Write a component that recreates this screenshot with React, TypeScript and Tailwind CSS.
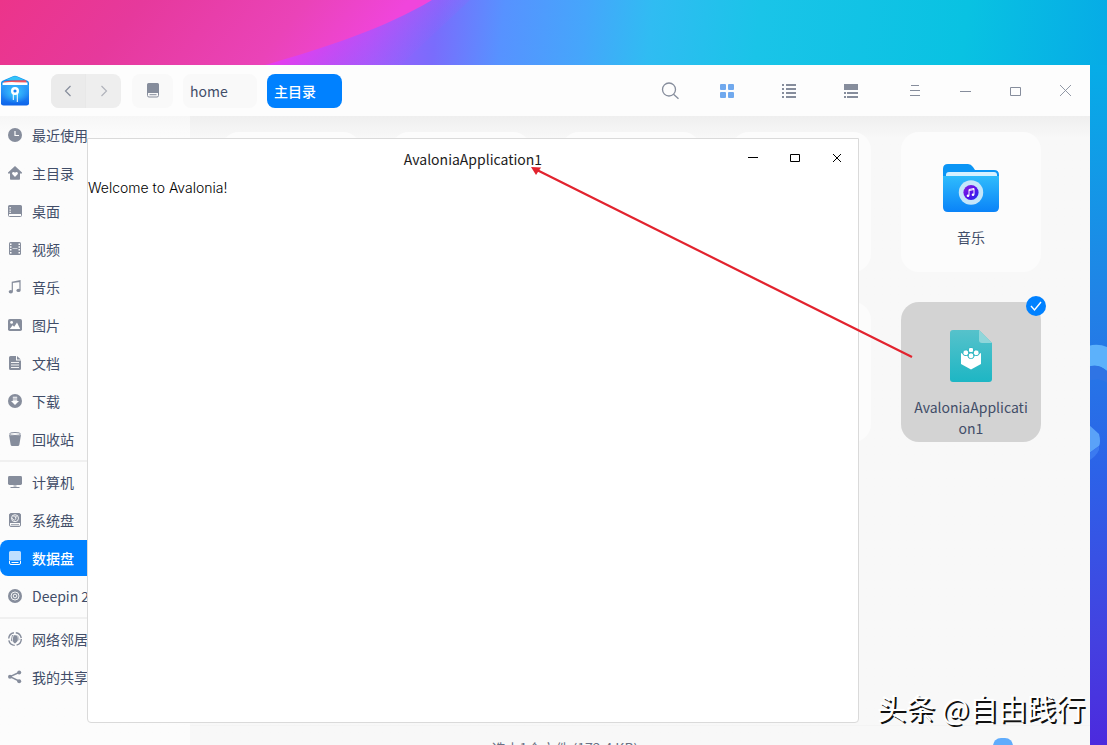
import { useState } from "react"
import type { ReactNode } from "react"

type Place = { id: string; label: string; icon: ReactNode }

/* 14x14 sidebar glyphs, all in currentColor */
function Glyph({ children }: { children: ReactNode }) {
  return (
    <svg viewBox="0 0 14 14" className="size-3.5 shrink-0" fill="currentColor" aria-hidden="true">
      {children}
    </svg>
  )
}

const groups: Place[][] = [
  [
    {
      id: "recent",
      label: "最近使用",
      icon: (
        <Glyph>
          <circle cx="7" cy="7" r="7" />
          <path d="M7 3v4.5h4" fill="none" stroke="#fff" strokeWidth="1.2" />
        </Glyph>
      ),
    },
    {
      id: "home",
      label: "主目录",
      icon: (
        <Glyph>
          <path d="M7 0l7 6.6c.2.5 0 .9-.5.9H12V13a.8.8 0 0 1-.8.8H2.8A.8.8 0 0 1 2 13V7.500H.500C0 7.500-.2 7 0 6.600z" />
          <path d="M7 11L4.400 8.300C3.600 7.300 4.300 5.900 5.500 5.900c.7 0 1.200.4 1.500.9.3-.5.8-.9 1.500-.9 1.200 0 1.900 1.400 1.100 2.400z" fill="#fff" />
        </Glyph>
      ),
    },
    {
      id: "desktop",
      label: "桌面",
      icon: (
        <Glyph>
          <path d="M1.500 1h11A1.500 1.500 0 0 1 14 2.500V10H0V2.500A1.500 1.500 0 0 1 1.500 1z" />
          <path d="M.5 10v1.500a1 1 0 0 0 1 1h11a1 1 0 0 0 1-1V10" fill="none" stroke="currentColor" />
          <path d="M1.500 3h1.300v1.300H1.500zM1.500 5.400h1.300v1.300H1.500zM1.500 7.800h1.300V9H1.500z" fill="#fff" />
        </Glyph>
      ),
    },
    {
      id: "videos",
      label: "视频",
      icon: (
        <Glyph>
          <rect x="1" y="0" width="12" height="13" rx="1.500" />
          <path d="M2 1.500h1.500V3H2zM2 4.300h1.500v1.500H2zM2 7.100h1.500v1.500H2zM2 9.900h1.500v1.500H2zM10.500 1.500H12V3h-1.500zM10.500 4.300H12v1.500h-1.500zM10.500 7.100H12v1.500h-1.500zM10.500 9.900H12v1.500h-1.500z" fill="#fff" />
          <path d="M4.500 6.500h5" stroke="#fff" strokeWidth=".6" />
        </Glyph>
      ),
    },
    {
      id: "music",
      label: "音乐",
      icon: (
        <Glyph>
          <path d="M4.300 11.500V2.300L12 .8v9.200M4.300 2.500L12 1.300" fill="none" stroke="currentColor" strokeWidth="1.200" />
          <ellipse cx="2.800" cy="11.700" rx="2.100" ry="1.700" />
          <ellipse cx="10.500" cy="10.400" rx="2.100" ry="1.700" />
        </Glyph>
      ),
    },
    {
      id: "pictures",
      label: "图片",
      icon: (
        <Glyph>
          <rect x="0" y="1" width="14" height="12" rx="1.800" />
          <circle cx="3.600" cy="4.400" r="1.400" fill="#fff" />
          <path d="M1.800 11l2.800-3.800 1.600 1.500L9 4.600l3.200 6.400z" fill="#fff" />
        </Glyph>
      ),
    },
    {
      id: "documents",
      label: "文档",
      icon: (
        <Glyph>
          <path d="M2.500 0H8v4.500h5v8a1.500 1.500 0 0 1-1.500 1.500h-9A1.500 1.500 0 0 1 1 12.500v-11A1.500 1.500 0 0 1 2.500 0z" />
          <path d="M9 0l3.800 3.500H9z" />
          <path d="M3 6.500h8M3 9h8M3 11.500h8" stroke="#fff" strokeWidth=".9" />
        </Glyph>
      ),
    },
    {
      id: "downloads",
      label: "下载",
      icon: (
        <Glyph>
          <circle cx="7" cy="7" r="7" />
          <path d="M4.800 2.800h4.400v.9H4.800zM4.800 4.600h4.400v.9H4.800zM4.800 6.300h4.400v.7H11L7 10.900 3 7h1.800z" fill="#fff" />
        </Glyph>
      ),
    },
    {
      id: "trash",
      label: "回收站",
      icon: (
        <Glyph>
          <ellipse cx="7" cy="2" rx="5.500" ry="1.500" fill="none" stroke="currentColor" />
          <path d="M1 2.800c2 1.300 10 1.300 12 0l-1.600 9.600c-.2 1.100-1 1.600-2 1.600H4.600c-1 0-1.800-.5-2-1.600z" />
        </Glyph>
      ),
    },
  ],
  [
    {
      id: "computer",
      label: "计算机",
      icon: (
        <Glyph>
          <rect x="0" y="1" width="14" height="9" rx="1.400" />
          <path d="M5.500 10.500h3v1h-3zM2.500 12h9v1h-9z" />
        </Glyph>
      ),
    },
    {
      id: "system",
      label: "系统盘",
      icon: (
        <Glyph>
          <rect x="1.500" y=".5" width="11" height="13" rx="1.500" fill="none" stroke="currentColor" />
          <path d="M1.500 1h11v9h-11z" />
          <circle cx="7" cy="5.200" r="3.500" fill="none" stroke="#fff" strokeWidth=".9" />
          <path d="M5.400 3.300c2.800-.6 3.400 2.600 1 4M7.200 4.800l1.300-1.800M3.800 5l2 2" fill="none" stroke="#fff" strokeWidth=".9" />
          <path d="M3 11.800h8" stroke="currentColor" />
        </Glyph>
      ),
    },
    {
      id: "data",
      label: "数据盘",
      icon: (
        <Glyph>
          <path d="M2.500 0h9A1.500 1.500 0 0 1 13 1.500V9.500H1v-8A1.500 1.500 0 0 1 2.500 0z" opacity=".75" />
          <path d="M1.500 10v2a1.500 1.500 0 0 0 1.500 1.500h8a1.500 1.500 0 0 0 1.500-1.500v-2M3.500 11.500h7" fill="none" stroke="currentColor" />
        </Glyph>
      ),
    },
    {
      id: "deepin",
      label: "Deepin 20",
      icon: (
        <Glyph>
          <circle cx="7" cy="7" r="7" />
          <circle cx="7" cy="7" r="4" fill="none" stroke="#fff" strokeWidth=".9" />
          <circle cx="7" cy="7" r="1.800" fill="none" stroke="#fff" strokeWidth=".9" />
        </Glyph>
      ),
    },
  ],
  [
    {
      id: "network",
      label: "网络邻居",
      icon: (
        <Glyph>
          <circle cx="7" cy="7" r="6.300" fill="none" stroke="currentColor" strokeWidth="1.400" strokeDasharray="8 1.900" />
          <path d="M4 3l6 .5 1.500 4L7 11.500 2.800 8.500z" />
          <path d="M7.500 1C3.500 4 3.500 10 6.500 13M8.500 2.500c2 2 2.500 6 .5 9" fill="none" stroke="#fff" strokeWidth=".8" />
        </Glyph>
      ),
    },
    {
      id: "shares",
      label: "我的共享",
      icon: (
        <Glyph>
          <path d="M2 6.700L11 2.500M2 6.700l9 4.300" stroke="currentColor" strokeWidth="1.400" />
          <circle cx="2" cy="6.700" r="2" />
          <circle cx="11.200" cy="2.400" r="2" />
          <circle cx="11.200" cy="11.200" r="2" />
        </Glyph>
      ),
    },
  ],
]

function Wallpaper() {
  return (
    <svg
      className="absolute inset-0 size-full"
      viewBox="0 0 1107 745"
      preserveAspectRatio="none"
      aria-hidden="true"
    >
      <defs>
        <linearGradient id="sky" gradientUnits="userSpaceOnUse" x1="290" y1="0" x2="1107" y2="90">
          <stop offset="0" stopColor="#c04df4" />
          <stop offset=".1" stopColor="#a35cfc" />
          <stop offset=".18" stopColor="#7a6cfc" />
          <stop offset=".26" stopColor="#5792ff" />
          <stop offset=".36" stopColor="#45a6fb" />
          <stop offset=".44" stopColor="#30bcf2" />
          <stop offset=".57" stopColor="#1ac4e8" />
          <stop offset=".82" stopColor="#09c2e2" />
          <stop offset="1" stopColor="#06abe6" />
        </linearGradient>
        <linearGradient id="pink" gradientUnits="userSpaceOnUse" x1="0" y1="0" x2="250" y2="200">
          <stop offset="0" stopColor="#ec348a" />
          <stop offset=".35" stopColor="#e6399c" />
          <stop offset=".75" stopColor="#ea43b8" />
          <stop offset="1" stopColor="#f045dc" />
        </linearGradient>
        <linearGradient id="glow" gradientUnits="userSpaceOnUse" x1="300" y1="40" x2="360" y2="110">
          <stop offset="0" stopColor="#e63cee" />
          <stop offset="1" stopColor="#a05afa" stopOpacity="0" />
        </linearGradient>
        <linearGradient id="side" x1="0" y1="0" x2="0" y2="1">
          <stop offset="0" stopColor="#06ade7" />
          <stop offset=".35" stopColor="#2182e6" />
          <stop offset=".6" stopColor="#2c62e8" />
          <stop offset=".85" stopColor="#4440e0" />
          <stop offset="1" stopColor="#4c2ade" />
        </linearGradient>
      </defs>
      <rect width="1107" height="745" fill="url(#sky)" />
      <path d="M220 66C320 45 380 25 430 0h40L400 66z" fill="url(#glow)" />
      <path d="M0 0h432C385 28 330 46 262 66H0z" fill="url(#pink)" />
      <rect x="1088" y="65" width="19" height="680" fill="url(#side)" />
      <path d="M1088 346q10-3 19 1v24q-9-8-19-4z" fill="#5cb1fb" />
      <path d="M1088 367q10-4 19 4v12q-8-6-19-2z" fill="#2f74e4" />
      <path d="M1088 424l11 10q2 8 0 12l-11 8z" fill="#5aa2f8" />
      <path d="M1088 454l11-8v4q-3 7-11 11z" fill="#3b7af0" />
    </svg>
  )
}

function FileManagerLogo() {
  return (
    <svg viewBox="0 0 30 32" className="h-8 w-[30px] shrink-0" aria-hidden="true">
      <defs>
        <linearGradient id="box" x1="0" y1="0" x2="0" y2="1">
          <stop offset="0" stopColor="#2ea0fb" />
          <stop offset="1" stopColor="#0d63ea" />
        </linearGradient>
        <radialGradient id="shine" cx=".5" cy=".4" r=".5">
          <stop offset="0" stopColor="#3ccbff" />
          <stop offset="1" stopColor="#3ccbff" stopOpacity="0" />
        </radialGradient>
      </defs>
      <path d="M1 8q0-1.500 1.500-2.200L13 1.200q2-.8 4 0l10.500 4.600Q29 6.500 29 8v6H1z" fill="#0f8ff0" />
      <path d="M6 5l7.500-3.500q1.500-.6 3 0L24 5z" fill="#35c3f7" />
      <path d="M4 6.500Q10 5 26 5.200l1 3.800H3z" fill="#f0565f" />
      <path d="M2.500 7.800Q10 6.500 16 7.200l11.500.3V11h-25z" fill="#fff" />
      <path d="M1 10h28V28.500q0 2-2.500 2h-23Q1 30.500 1 28.500z" fill="url(#box)" />
      <path d="M1 10h28V28.500q0 2-2.500 2h-23Q1 30.500 1 28.500z" fill="url(#shine)" />
      <circle cx="15" cy="16" r="2.800" fill="#1684f5" stroke="#fff" strokeWidth="2.400" />
      <path d="M13.300 19v6M17.300 19v8" stroke="#fff" strokeWidth="1" />
    </svg>
  )
}

function DiskIcon() {
  return (
    <svg viewBox="0 0 12 15" className="h-[15px] w-3" aria-hidden="true">
      <path d="M1.500 0h9A1.500 1.500 0 0 1 12 1.500V10H0V1.500A1.500 1.500 0 0 1 1.500 0z" fill="#868d9c" />
      <path d="M.5 10v2.500q0 1.500 1.500 1.500h8q1.500 0 1.500-1.500V10M2.500 11.700h7" fill="none" stroke="#868d9c" />
    </svg>
  )
}

function MusicFolder() {
  return (
    <svg viewBox="0 0 64 64" className="size-16" aria-hidden="true">
      <defs>
        <linearGradient id="folder" x1="0" y1="0" x2="0" y2="1">
          <stop offset="0" stopColor="#2fbcfc" />
          <stop offset="1" stopColor="#0a83f8" />
        </linearGradient>
        <linearGradient id="disc" x1="0" y1="0" x2="1" y2="1">
          <stop offset="0" stopColor="#8a24dd" />
          <stop offset=".5" stopColor="#5a10e8" />
          <stop offset="1" stopColor="#1a30f0" />
        </linearGradient>
      </defs>
      <path d="M4 13q0-5 5-5h20q3 0 5 3l2 3h19q5 0 5 5v8H4z" fill="#0b95f5" />
      <path d="M7 27v-8q0-3 3-3h45q3 0 3 3v8z" fill="#d6f1ff" />
      <path d="M4 20h56v31q0 5-5 5H9q-5 0-5-5z" fill="url(#folder)" />
      <circle cx="32" cy="36.500" r="12.200" fill="#c5e6fa" />
      <circle cx="32" cy="36.500" r="7.600" fill="url(#disc)" />
      <path d="M30 39.500v-6l5-1v6M30 34.500l5-1" fill="none" stroke="#fff" strokeWidth="1" />
      <circle cx="29" cy="39.700" r="1.300" fill="#fff" />
      <circle cx="34" cy="38.700" r="1.300" fill="#fff" />
    </svg>
  )
}

function ExecutableFile() {
  return (
    <svg viewBox="0 0 64 64" className="size-16" aria-hidden="true">
      <defs>
        <linearGradient id="sheet" x1="0" y1="0" x2="0" y2="1">
          <stop offset="0" stopColor="#56c2cb" />
          <stop offset="1" stopColor="#1db6c4" />
        </linearGradient>
      </defs>
      <path d="M14 4h26l13 13v36q0 3-3 3H14q-3 0-3-3V7q0-3 3-3z" fill="url(#sheet)" />
      <path d="M40 4l13 13H43q-3 0-3-3z" fill="#8fd6da" />
      <path d="M22 27l10 5 10-5v11l-10 5.500L22 38z" fill="#fff" />
      <g fill="#fff" stroke="#35b9c4" strokeWidth="1">
        <rect x="29.500" y="21.500" width="5" height="5" rx="1.500" />
        <rect x="24" y="24" width="5.500" height="5.500" rx="2" />
        <rect x="34.500" y="24" width="5.500" height="5.500" rx="2" />
        <rect x="29.300" y="27" width="5.400" height="5.500" rx="2" />
      </g>
    </svg>
  )
}

function Tile({ children }: { children?: ReactNode }) {
  return (
    <li className="flex h-[140px] w-[140px] flex-col items-center gap-[7px] rounded-[18px] bg-[#fcfcfc] px-3 pt-6 text-center">
      {children}
    </li>
  )
}

function Toolbar() {
  return (
    <header className="flex h-[51px] shrink-0 items-center bg-[#fdfdfd] text-[#868d9c]">
      <FileManagerLogo />
      <div className="ml-[21px] flex h-[34px] overflow-hidden rounded-lg bg-[#eeeeee]">
        <button aria-label="后退" className="grid w-[35px] place-items-center border-r border-[#e8e8e8] bg-[#ebebeb]">
          <svg viewBox="0 0 8 12" className="h-3 w-2" fill="none" stroke="currentColor">
            <path d="M6.500 1L1.500 6l5 5" strokeWidth="1.200" />
          </svg>
        </button>
        <button aria-label="前进" className="grid w-[35px] place-items-center text-[#b0b3bb]">
          <svg viewBox="0 0 8 12" className="h-3 w-2" fill="none" stroke="currentColor">
            <path d="M1.500 1l5 5-5 5" strokeWidth="1.200" />
          </svg>
        </button>
      </div>
      <nav className="ml-[11px] flex h-[34px] gap-2.5 text-sm font-medium">
        <button aria-label="磁盘" className="grid w-[41px] place-items-center rounded-lg bg-[#f9f9f9]">
          <DiskIcon />
        </button>
        <button className="w-[74px] rounded-lg bg-[#f9f9f9] px-[7px] text-left font-normal text-[#414d68]">home</button>
        <button className="w-[75px] rounded-lg bg-[#0081ff] px-[7px] text-left text-white">主目录</button>
      </nav>

      <div className="ml-auto mr-2 flex h-full">
        <button aria-label="搜索" className="grid w-[52px] place-items-center">
          <svg viewBox="0 0 18 18" className="size-[18px]" fill="none" stroke="currentColor" strokeWidth="1.300">
            <circle cx="8" cy="7.500" r="6.500" />
            <path d="M12.500 12.200l5 4.600" />
          </svg>
        </button>
        <button aria-label="图标视图" className="grid w-[62px] place-items-center text-[#70a9ee]">
          <svg viewBox="0 0 14 14" className="size-3.5" fill="currentColor">
            <rect width="6" height="6" rx="1" />
            <rect x="8" width="6" height="6" rx="1" />
            <rect y="8" width="6" height="6" rx="1" />
            <rect x="8" y="8" width="6" height="6" rx="1" />
          </svg>
        </button>
        <button aria-label="列表视图" className="grid w-[62px] place-items-center">
          <svg viewBox="0 0 14 14" className="size-3.5" fill="currentColor">
            <path d="M0 0h2v2H0zM0 4h2v2H0zM0 8h2v2H0zM0 12h2v2H0zM4 0h10v2H4zM4 4h10v2H4zM4 8h10v2H4zM4 12h10v2H4z" />
          </svg>
        </button>
        <button aria-label="分栏视图" className="grid w-[62px] place-items-center">
          <svg viewBox="0 0 14 14" className="size-3.5" fill="currentColor">
            <path d="M0 0h14v6H0zM0 8h2v2H0zM0 12h2v2H0zM3 8h11v2H3zM3 12h11v2H3z" />
          </svg>
        </button>
      </div>
      <div className="flex h-full">
        <button aria-label="菜单" className="grid w-[50px] place-items-center">
          <svg viewBox="0 0 10 11" className="h-[11px] w-2.5" stroke="currentColor">
            <path d="M1 .5h8M0 5.500h10M0 10.500h10" />
          </svg>
        </button>
        <button aria-label="最小化" className="grid w-[50px] place-items-center">
          <svg viewBox="0 0 11 11" className="size-[11px]" stroke="currentColor">
            <path d="M0 6.500h11" />
          </svg>
        </button>
        <button aria-label="最大化" className="grid w-[50px] place-items-center">
          <svg viewBox="0 0 11 11" className="size-[11px]" fill="none" stroke="currentColor">
            <path d="M.5 2.500h10v8H.5z" />
          </svg>
        </button>
        <button aria-label="关闭" className="grid w-[50px] place-items-center">
          <svg viewBox="0 0 11 11" className="size-[11px]" stroke="currentColor" strokeWidth=".9">
            <path d="M0 0l11 11M11 0L0 11" />
          </svg>
        </button>
      </div>
    </header>
  )
}

function Sidebar() {
  const [active, setActive] = useState("data")

  return (
    <aside className="w-[190px] shrink-0 bg-[#fcfcfc] bg-linear-to-b from-[#f6f6f6] to-[#fcfcfc] to-[20px] pt-px">
      {groups.map((places, i) => (
        <ul key={i} className={i > 0 ? "mt-[3px] flex flex-col gap-0.5 border-t-2 border-[#f0f0f0] pt-0.5" : "flex flex-col gap-0.5"}>
          {places.map((place) => (
            <li key={place.id}>
              <button
                onClick={() => setActive(place.id)}
                className={
                  place.id === active
                    ? "flex h-9 w-full items-center gap-2.5 rounded-lg bg-[#0081ff] pl-2 text-sm font-medium text-white"
                    : "flex h-9 w-full items-center gap-2.5 rounded-lg pl-2 text-sm text-[#414d68]"
                }
              >
                <span className={place.id === active ? "text-white" : "text-[#868d9c]"}>{place.icon}</span>
                {place.label}
              </button>
            </li>
          ))}
        </ul>
      ))}
    </aside>
  )
}

function FileManager() {
  const [zoom, setZoom] = useState(34)

  return (
    <section className="relative -mb-6 mr-[17px] mt-[65px] flex min-h-0 flex-1 flex-col">
      <Toolbar />
      <div className="flex min-h-0 flex-1">
        <Sidebar />
        <main className="flex min-w-0 flex-1 flex-col bg-[#f8f8f8] bg-linear-to-b from-[#efefef] to-[#f8f8f8] to-[22px]">
          <ul className="flex flex-1 flex-wrap content-start gap-[30px] pl-[31px] pt-4 text-sm leading-[21px] text-[#414d68]">
            <Tile />
            <Tile />
            <Tile />
            <Tile />
            <Tile>
              <MusicFolder />
              <span>音乐</span>
            </Tile>
            <Tile />
            <Tile />
            <Tile />
            <Tile />
            <li className="relative flex h-[140px] w-[140px] flex-col items-center gap-[7px] rounded-[18px] bg-[#d3d3d3] px-3 pt-6 text-center">
              <ExecutableFile />
              <span className="w-full break-all">AvaloniaApplication1</span>
              <span className="absolute -right-[5px] -top-1.5 grid size-5 place-items-center rounded-full bg-[#0081ff]">
                <svg viewBox="0 0 12 12" className="size-3" fill="none" stroke="#fff" strokeWidth="1.400">
                  <path d="M1 6l3.500 4L11 2" />
                </svg>
              </span>
            </li>
          </ul>
          <footer className="flex h-11 shrink-0 items-center border-t border-[#f4f4f4] text-sm text-[#6b7285]">
            <p className="flex-1 text-center">选中1个文件 (172.4 KB)</p>
            <div className="flex w-[150px] items-center justify-center">
              <input
                type="range"
                aria-label="图标大小"
                value={zoom}
                onChange={(e) => setZoom(Number(e.target.value))}
                className="h-5 w-24 appearance-none bg-transparent [&::-webkit-slider-thumb]:h-5 [&::-webkit-slider-thumb]:w-5 [&::-webkit-slider-thumb]:appearance-none [&::-webkit-slider-thumb]:rounded-lg [&::-webkit-slider-thumb]:bg-[#60acfc]"
              />
            </div>
          </footer>
        </main>
      </div>
    </section>
  )
}

function AvaloniaWindow() {
  return (
    <section className="absolute left-[87px] top-[138px] flex h-[585px] w-[772px] flex-col rounded-b-sm border border-[#dadada] bg-white text-[#1c1c1c]">
      <header className="grid h-[38px] grid-cols-[1fr_auto_1fr] items-center">
        <h1 className="col-start-2 pt-0.5 text-sm">AvaloniaApplication1</h1>
        <div className="flex h-full justify-end text-black">
          <button aria-label="最小化" className="grid w-[42px] place-items-center">
            <svg viewBox="0 0 10 10" className="size-2.5" stroke="currentColor">
              <path d="M0 4.500h10" />
            </svg>
          </button>
          <button aria-label="最大化" className="grid w-[42px] place-items-center">
            <svg viewBox="0 0 10 10" className="size-2.5" fill="none" stroke="currentColor">
              <path d="M.5 1.500h9v7h-9z" />
            </svg>
          </button>
          <button aria-label="关闭" className="grid w-[42px] place-items-center">
            <svg viewBox="0 0 10 10" className="size-2.5" stroke="currentColor">
              <path d="M1 1l8 8M9 1L1 9" />
            </svg>
          </button>
        </div>
      </header>
      <p className="font-[Inter,sans-serif] text-sm leading-[22px] font-light text-black">Welcome to Avalonia!</p>
    </section>
  )
}

export default function App() {
  return (
    <div className="relative flex h-screen flex-col overflow-hidden font-['Noto_Sans_CJK_SC',sans-serif]">
      <Wallpaper />
      <FileManager />
      <AvaloniaWindow />

      {/* Arrow from the file to the window title */}
      <svg
        viewBox="0 0 382 192"
        className="pointer-events-none absolute left-[531px] top-[166px] h-48 w-[382px]"
        aria-hidden="true"
      >
        <path d="M381 191L6 4" stroke="#e2232e" strokeWidth="2.200" />
        <path d="M0 1l10 .5-5 7.500z" fill="#e2232e" />
      </svg>

      <p className="absolute bottom-[22px] right-[22px] text-[29px] leading-8 text-white [text-shadow:2px_2px_0_#111]">
        头条 @自由践行
      </p>
    </div>
  )
}
